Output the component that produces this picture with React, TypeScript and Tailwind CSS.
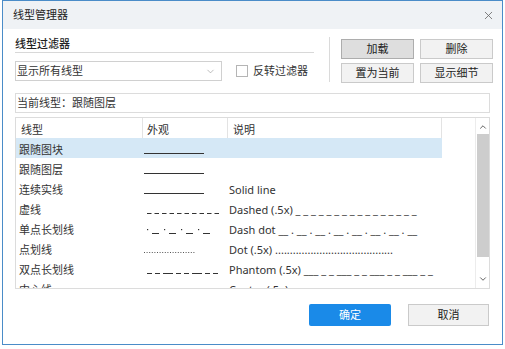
import { X, ChevronDown, ChevronUp } from "lucide-react";

type Row = {
  name: string;
  look: "solid" | "dashed" | "dashdot" | "dot" | "phantom" | "center";
  desc: string;
};

const rows: Row[] = [
  { name: "跟随图块", look: "solid", desc: "" },
  { name: "跟随图层", look: "solid", desc: "" },
  { name: "连续实线", look: "solid", desc: "Solid line" },
  { name: "虚线", look: "dashed", desc: "Dashed (.5x) _ _ _ _ _ _ _ _ _ _ _ _ _ _ _ _" },
  { name: "单点长划线", look: "dashdot", desc: "Dash dot __ . __ . __ . __ . __ . __ . __ . __" },
  { name: "点划线", look: "dot", desc: "Dot (.5x) ........................................" },
  { name: "双点长划线", look: "phantom", desc: "Phantom (.5x) ___ _ _ ___ _ _ ___ _ _ ___ _ _" },
  { name: "中心线", look: "center", desc: "Center (.5x) ____ _ ____ _ ____ _ ____" },
];

function Look({ kind }: { kind: Row["look"] }) {
  const y = 15.5;
  let parts: JSX.Element[] = [];
  if (kind === "solid") {
    parts = [<line key="s" x1={1} x2={61} y1={y} y2={y} stroke="#333" strokeWidth={1} />];
  } else if (kind === "dashed") {
    parts = [
      <line key="d" x1={4} x2={78} y1={y} y2={y} stroke="#333" strokeWidth={1} strokeDasharray="4.5 3" />,
    ];
  } else if (kind === "dot") {
    parts = [
      <line key="d" x1={1} x2={52} y1={14.5} y2={14.5} stroke="#555" strokeWidth={1} strokeDasharray="1 1.6" />,
    ];
  } else if (kind === "dashdot") {
    for (let i = 0; i < 4; i++) {
      const x = 4 + i * 17;
      parts.push(<rect key={"p" + i} x={x} y={11} width={1.2} height={1.2} fill="#333" />);
      parts.push(<rect key={"l" + i} x={x + 5} y={15} width={7} height={1} fill="#333" />);
    }
  } else {
    const seq = [5, 5, 10, 5, 5, 10, 5, 5];
    let x = 4;
    seq.forEach((w, i) => {
      parts.push(<rect key={i} x={x} y={15} width={w} height={1} fill="#333" />);
      x += w + 3;
    });
  }
  return (
    <svg width="85" height="20" className="block">
      {parts}
    </svg>
  );
}

function Btn({ label, pressed }: { label: string; pressed?: boolean }) {
  return (
    <div
      className={
        pressed
          ? "h-[20px] flex items-center justify-center border border-[#adadad] bg-[#dedede] text-[11px] text-[#222]"
          : "h-[20px] flex items-center justify-center border border-[#cacaca] bg-[#f2f2f2] text-[11px] text-[#222]"
      }
    >
      {label}
    </div>
  );
}

export default function App() {
  return (
    <div
      className="w-[505px] h-[349px] bg-white text-[#333] text-[11px]"
      style={{ fontFamily: '"Noto Sans", "Noto Sans CJK SC", sans-serif' }}
    >
      <div className="ml-[2px] w-[501px] h-[345px] border border-[#4a8cc8] flex flex-col bg-white">
        {/* title bar */}
        <div className="h-[28px] bg-[#eff2f5] flex items-center justify-between pl-[10px] pr-[7px]">
          <span className="text-[11px] text-[#222] pt-[1px]">线型管理器</span>
          <X className="w-[13px] h-[13px] text-[#666]" strokeWidth={1.5} />
        </div>

        {/* filter section */}
        <div className="flex mt-[7px]">
          <div className="ml-[12px] w-[299px]">
            <div className="h-[17px] leading-[16px] border-b border-[#d8d8d8] font-medium text-[#222]">
              线型过滤器
            </div>
            <div className="flex items-center mt-[8px]">
              <div className="w-[207px] h-[20px] border border-[#d0d0d0] flex items-center justify-between pl-[1px] pr-[5px]">
                <span className="pt-[1px]">显示所有线型</span>
                <ChevronDown className="w-[11px] h-[11px] text-[#888]" strokeWidth={1.2} />
              </div>
              <div className="ml-[14px] w-[12px] h-[12px] border border-[#b5b5b5] bg-white" />
              <span className="ml-[5px] pt-[1px]">反转过滤器</span>
            </div>
          </div>
          <div className="ml-[15px] mt-[1px] w-px h-[45px] bg-[#dadada]" />
          <div className="ml-[11px] mt-[3px] grid grid-cols-[73px_73px] gap-x-[6px] gap-y-[4px]">
            <Btn label="加载" pressed />
            <Btn label="删除" />
            <Btn label="置为当前" />
            <Btn label="显示细节" />
          </div>
        </div>

        {/* current linetype */}
        <div className="ml-[12px] mt-[10px] w-[475px] h-[20px] border border-[#dcdcdc] flex items-center pl-[1px] pt-[1px]">
          当前线型：跟随图层
        </div>

        {/* table */}
        <div className="ml-[12px] mt-[4px] w-[475px] h-[172px] border border-[#dcdcdc] flex overflow-hidden">
          <div className="flex-1 flex flex-col overflow-hidden">
            <div className="h-[20px] flex shrink-0">
              <div className="w-[127px] border-r border-[#e3e3e3] pl-[5px] pt-[4px] flex items-center">线型</div>
              <div className="w-[85px] border-r border-[#e3e3e3] pl-[4px] pt-[4px] flex items-center">外观</div>
              <div className="w-[214px] border-r border-[#e3e3e3] pl-[5px] pt-[4px] flex items-center">说明</div>
            </div>
            {rows.map((r, i) => (
              <div
                key={r.name}
                className={
                  i === 0
                    ? "h-[20px] w-[426px] flex shrink-0 bg-[#d5e8f6]"
                    : "h-[20px] w-[426px] flex shrink-0"
                }
              >
                <div className="w-[127px] pl-[3px] pt-[4px] flex items-center">{r.name}</div>
                <div className="w-[85px]">
                  <Look kind={r.look} />
                </div>
                <div className="w-[214px] pl-[1px] pt-[4px] flex items-center whitespace-nowrap overflow-visible">
                  {r.desc}
                </div>
              </div>
            ))}
          </div>
          <div className="w-[14px] border-l border-[#ececec] flex flex-col items-center">
            <ChevronUp className="w-[10px] h-[10px] mt-[4px] text-[#555]" strokeWidth={2.2} />
            <div className="mt-[2px] w-[12px] h-[123px] bg-[#cdcdcd]" />
            <div className="flex-1" />
            <ChevronDown className="w-[10px] h-[10px] mb-[4px] text-[#555]" strokeWidth={2.2} />
          </div>
        </div>

        {/* footer buttons */}
        <div className="flex mt-[15px]">
          <div className="ml-[306px] w-[82px] h-[22px] rounded-[2px] bg-[#1a8ae8] text-white flex items-center justify-center">
            确定
          </div>
          <div className="ml-[17px] w-[81px] h-[22px] border border-[#cacaca] bg-[#f2f2f2] text-[#222] flex items-center justify-center">
            取消
          </div>
        </div>
      </div>
    </div>
  );
}
